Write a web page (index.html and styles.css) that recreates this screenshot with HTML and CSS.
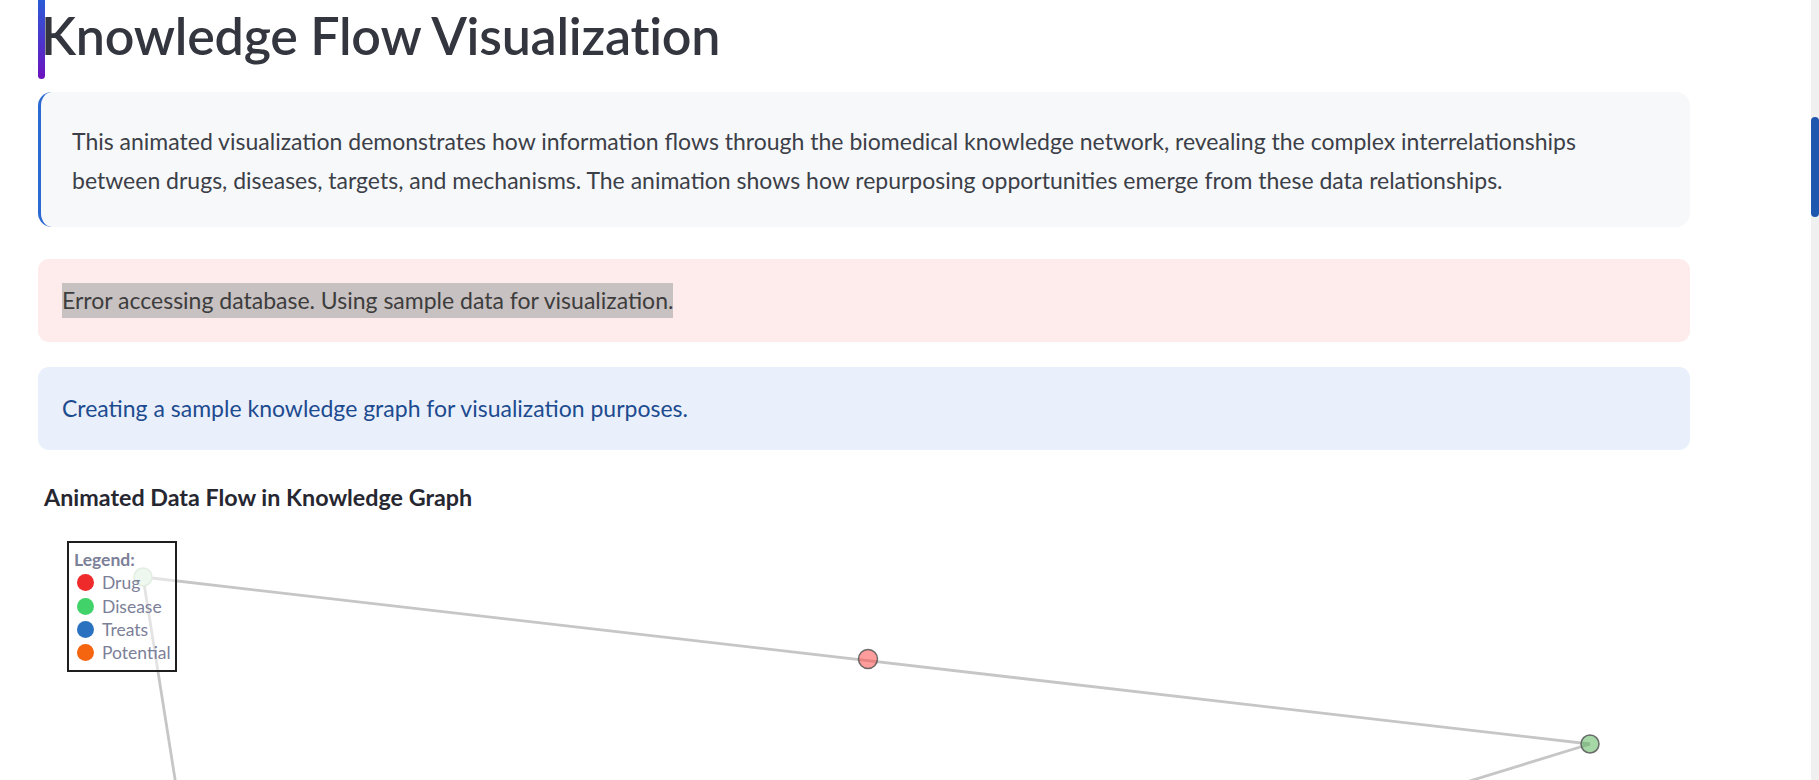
FILE: index.html
```html
<!DOCTYPE html>
<html lang="en">
<head>
<meta charset="utf-8">
<title>Knowledge Flow Visualization</title>
<link rel="stylesheet" href="styles.css">
</head>
<body>
<div class="page">
  <main class="main">
    <h1 class="title"><span class="title-bar"></span><span class="title-text">Knowledge Flow Visualization</span></h1>
    <div class="intro">
      <p>This animated visualization demonstrates how information flows through the biomedical knowledge network, revealing the complex interrelationships<br>between drugs, diseases, targets, and mechanisms. The animation shows how repurposing opportunities emerge from these data relationships.</p>
    </div>
    <div class="alert alert-error"><span class="hl">Error accessing database. Using sample data for visualization.</span></div>
    <div class="alert alert-info">Creating a sample knowledge graph for visualization purposes.</div>
    <h3 class="chart-title">Animated Data Flow in Knowledge Graph</h3>
    <div class="chart">
      <svg class="graph" width="1652" height="400" viewBox="0 0 1652 400">
        <line class="edge" x1="105" y1="57" x2="1552" y2="224"/>
        <line class="edge" x1="105" y1="57" x2="153" y2="360"/>
        <line class="edge" x1="1552" y1="224" x2="1110" y2="360"/>
        <circle class="node node-faded" cx="105" cy="57" r="9"/>
        <circle class="node node-disease" cx="1552" cy="224" r="9"/>
        <circle class="node particle" cx="830" cy="139" r="9.5"/>
      </svg>
      <div class="legend">
        <div class="legend-title">Legend:</div>
        <div class="legend-item"><span class="dot dot-drug"></span>Drug</div>
        <div class="legend-item"><span class="dot dot-disease"></span>Disease</div>
        <div class="legend-item"><span class="dot dot-treats"></span>Treats</div>
        <div class="legend-item"><span class="dot dot-potential"></span>Potential</div>
      </div>
    </div>
  </main>
  <div class="scrollbar"><div class="thumb"></div></div>
</div>
</body>
</html>
```
FILE: styles.css
```css
* { box-sizing: border-box; }
html, body {
  margin: 0;
  padding: 0;
  background: #ffffff;
}
body {
  font-family: Lato, "Noto Sans", sans-serif;
  color: #31333f;
  height: 780px;
  overflow: hidden;
}
.page {
  display: flex;
  height: 780px;
}
.main {
  flex: 1;
  padding: 0 121px 0 38px;
  min-width: 0;
}
.title {
  display: flex;
  align-items: flex-start;
  height: 79px;
  margin: 0;
}
.title-bar {
  width: 7px;
  height: 79px;
  flex: none;
  background: linear-gradient(180deg, #2b5bd6 0%, #4a37cc 50%, #6d12bf 100%);
  border-radius: 0 0 3.5px 3.5px;
}
.title-text {
  padding-top: 9px;
  margin-left: -4px;
  font-size: 52px;
  line-height: 1;
  font-weight: 600;
  color: #33363e;
  letter-spacing: -0.25px;
}
.intro {
  margin-top: 13px;
  height: 135px;
  background: #f7f8fa;
  border-left: 3px solid #2b6ad2;
  border-radius: 14px;
  padding: 30px 30px 28px 31px;
}
.intro p {
  margin: 0;
  font-size: 23px;
  line-height: 38.5px;
  color: #3c3f48;
}
.alert {
  height: 83px;
  border-radius: 11px;
  padding: 24px 24px;
  font-size: 23px;
  line-height: 35px;
}
.alert-error {
  margin-top: 32px;
  background: #feebeb;
  color: #3d3d3d;
}
.hl {
  display: inline-block;
  background: #c8c1c1;
  line-height: 35px;
}
.alert-info {
  margin-top: 25px;
  background: #e9f0fb;
  color: #1d4b8f;
}
.chart-title {
  margin: 33px 0 0 0;
  padding-left: 6px;
  font-size: 23.3px;
  line-height: 28px;
  font-weight: 700;
  color: #262730;
}
.chart {
  position: relative;
  margin-top: 9px;
  height: 400px;
}
.graph {
  display: block;
}
.edge {
  stroke: #c6c6c6;
  stroke-width: 2.8;
}
.node {
  stroke-width: 1.5;
}
.node-faded {
  fill: #ddf0dd;
  stroke: #c6dbc6;
}
.node-disease {
  fill: #4caf50;
  fill-opacity: 0.5;
  stroke: #555555;
  stroke-opacity: 0.85;
}
.particle {
  fill: #ff4d4d;
  fill-opacity: 0.55;
  stroke: #555555;
  stroke-opacity: 0.85;
}
.legend {
  position: absolute;
  left: 29px;
  top: 21px;
  width: 110px;
  height: 131px;
  border: 2px solid #1e1e1e;
  background: rgba(255, 255, 255, 0.5);
  padding: 5px 4px 5px 5px;
  color: #7c8098;
  font-size: 17.5px;
}
.legend-title {
  font-weight: 700;
  line-height: 23.3px;
}
.legend-item {
  display: flex;
  align-items: center;
  height: 23.3px;
  line-height: 23.3px;
}
.dot {
  width: 17px;
  height: 17px;
  border-radius: 50%;
  margin: 0 8px 0 3px;
  flex: none;
}
.dot-drug { background: #ee2a2a; }
.dot-disease { background: #41d36a; }
.dot-treats { background: #2a72c0; }
.dot-potential { background: #f5650f; }
.scrollbar {
  width: 8px;
  flex: none;
  background: #f0f0f0;
  height: 780px;
  padding-top: 117px;
}
.thumb {
  width: 8px;
  height: 100px;
  background: #1f56ae;
  border-radius: 4px;
}
```
